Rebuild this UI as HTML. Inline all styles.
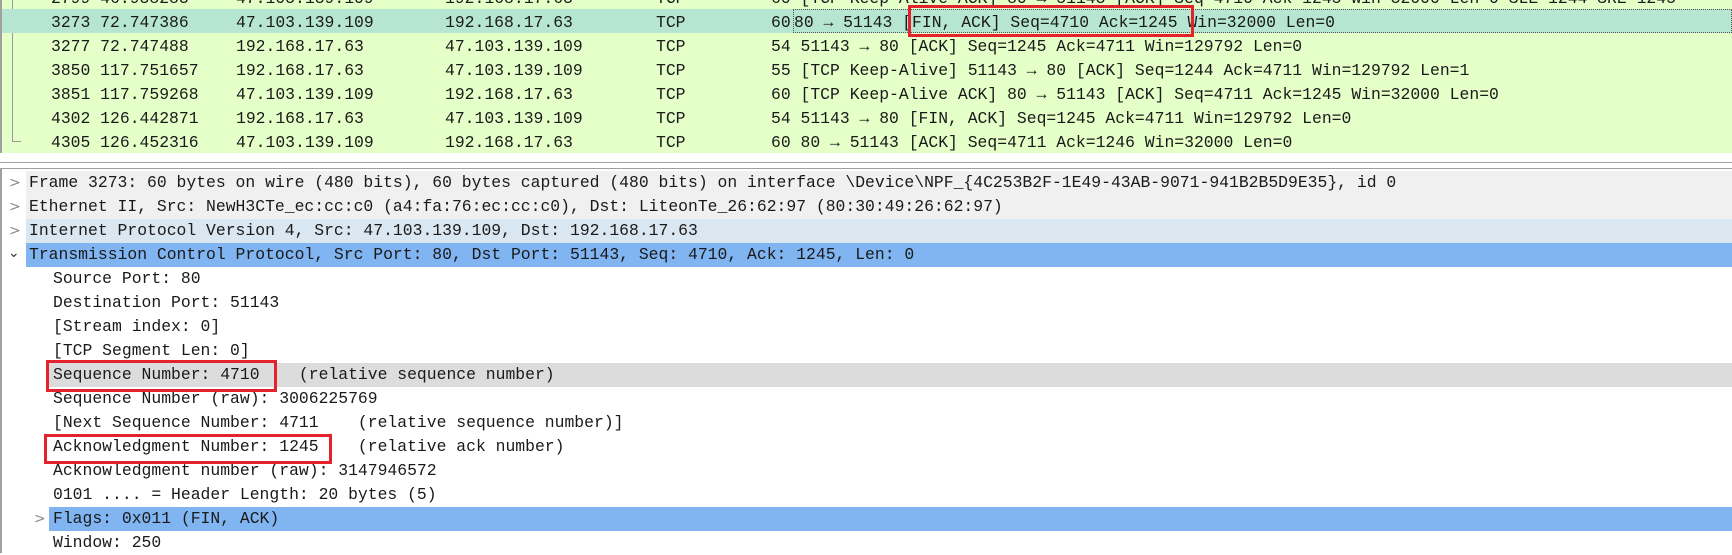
<!DOCTYPE html>
<html><head><style>
*{margin:0;padding:0;box-sizing:border-box}
body{width:1732px;height:553px;overflow:hidden;background:#fff;font-family:"Liberation Mono","DejaVu Sans Mono",monospace;font-size:16.4px;color:#1a1a1a;position:relative}
.r{position:absolute;height:24px;line-height:24px;white-space:pre}
.top{position:absolute;left:0;top:0;width:1732px;height:153px;background:#e4ffc7;border-left:2px solid #a0a0a0}
.sel{background:#b6e6d2}
.c{position:absolute;top:2px;white-space:pre}
.rb{position:absolute;border:3.5px solid #e3222b}
.arrow{position:absolute;color:#888;font-family:"DejaVu Sans",sans-serif;font-size:14px}
</style></head><body>
<div class="top"></div>
<div style="position:absolute;left:12px;top:0;width:1px;height:142px;background:#999"></div>
<div style="position:absolute;left:12px;top:141px;width:9px;height:1px;background:#999"></div>

<div class="r" style="top:-15px;left:0;width:1732px"><span class="c" style="left:51px">2799 46.938283</span><span class="c" style="left:236px">47.103.139.109</span><span class="c" style="left:445px">192.168.17.63</span><span class="c" style="left:656px">TCP</span><span class="c" style="left:771px">60 [TCP Keep-Alive ACK] 80 → 51143 [ACK] Seq=4710 Ack=1245 Win=32000 Len=0 SLE=1244 SRE=1245</span></div>

<div class="r sel" style="top:9px;left:2px;width:1730px"><span class="c" style="left:49px">3273 72.747386</span><span class="c" style="left:234px">47.103.139.109</span><span class="c" style="left:443px">192.168.17.63</span><span class="c" style="left:654px">TCP</span><span class="c" style="left:769px">60</span><span class="c" style="left:791px;top:0;height:24px;width:939px;border:1px dotted #555;line-height:26px">80 → 51143 [FIN, ACK] Seq=4710 Ack=1245 Win=32000 Len=0</span></div>
<div class="r" style="top:33px;left:0"><span class="c" style="left:51px">3277 72.747488</span><span class="c" style="left:236px">192.168.17.63</span><span class="c" style="left:445px">47.103.139.109</span><span class="c" style="left:656px">TCP</span><span class="c" style="left:771px">54 51143 → 80 [ACK] Seq=1245 Ack=4711 Win=129792 Len=0</span></div>
<div class="r" style="top:57px;left:0"><span class="c" style="left:51px">3850 117.751657</span><span class="c" style="left:236px">192.168.17.63</span><span class="c" style="left:445px">47.103.139.109</span><span class="c" style="left:656px">TCP</span><span class="c" style="left:771px">55 [TCP Keep-Alive] 51143 → 80 [ACK] Seq=1244 Ack=4711 Win=129792 Len=1</span></div>
<div class="r" style="top:81px;left:0"><span class="c" style="left:51px">3851 117.759268</span><span class="c" style="left:236px">47.103.139.109</span><span class="c" style="left:445px">192.168.17.63</span><span class="c" style="left:656px">TCP</span><span class="c" style="left:771px">60 [TCP Keep-Alive ACK] 80 → 51143 [ACK] Seq=4711 Ack=1245 Win=32000 Len=0</span></div>
<div class="r" style="top:105px;left:0"><span class="c" style="left:51px">4302 126.442871</span><span class="c" style="left:236px">192.168.17.63</span><span class="c" style="left:445px">47.103.139.109</span><span class="c" style="left:656px">TCP</span><span class="c" style="left:771px">54 51143 → 80 [FIN, ACK] Seq=1245 Ack=4711 Win=129792 Len=0</span></div>
<div class="r" style="top:129px;left:0"><span class="c" style="left:51px">4305 126.452316</span><span class="c" style="left:236px">47.103.139.109</span><span class="c" style="left:445px">192.168.17.63</span><span class="c" style="left:656px">TCP</span><span class="c" style="left:771px">60 80 → 51143 [ACK] Seq=4711 Ack=1246 Win=32000 Len=0</span></div>
<div class="rb" style="left:908px;top:5px;width:286px;height:32px"></div>

<div style="position:absolute;left:0;top:162px;width:1732px;height:1px;background:#a0a0a0"></div>
<div style="position:absolute;left:0;top:168px;width:1732px;height:1px;background:#a0a0a0"></div>
<div style="position:absolute;left:0;top:168px;width:2px;height:385px;background:#a0a0a0"></div>

<div class="r" style="top:171px;left:26px;width:1706px;background:#f0f0f0;padding-left:3px">Frame 3273: 60 bytes on wire (480 bits), 60 bytes captured (480 bits) on interface \Device\NPF_{4C253B2F-1E49-43AB-9071-941B2B5D9E35}, id 0</div>
<div class="r" style="top:195px;left:26px;width:1706px;background:#f0f0f0;padding-left:3px">Ethernet II, Src: NewH3CTe_ec:cc:c0 (a4:fa:76:ec:cc:c0), Dst: LiteonTe_26:62:97 (80:30:49:26:62:97)</div>
<div class="r" style="top:219px;left:26px;width:1706px;background:#dae6f0;padding-left:3px">Internet Protocol Version 4, Src: 47.103.139.109, Dst: 192.168.17.63</div>
<div class="r" style="top:243px;left:26px;width:1706px;background:#80b5f2;padding-left:3px">Transmission Control Protocol, Src Port: 80, Dst Port: 51143, Seq: 4710, Ack: 1245, Len: 0</div>
<div class="arrow" style="left:9px;top:175px">&gt;</div>
<div class="arrow" style="left:9px;top:199px">&gt;</div>
<div class="arrow" style="left:9px;top:223px">&gt;</div>
<div class="arrow" style="left:8px;top:245px;color:#333">⌄</div>

<div class="r" style="top:267px;left:53px">Source Port: 80</div>
<div class="r" style="top:291px;left:53px">Destination Port: 51143</div>
<div class="r" style="top:315px;left:53px">[Stream index: 0]</div>
<div class="r" style="top:339px;left:53px">[TCP Segment Len: 0]</div>
<div class="r" style="top:363px;left:49px;width:1683px;background:#dcdcdc;padding-left:4px">Sequence Number: 4710    (relative sequence number)</div>
<div class="r" style="top:387px;left:53px">Sequence Number (raw): 3006225769</div>
<div class="r" style="top:411px;left:53px">[Next Sequence Number: 4711    (relative sequence number)]</div>
<div class="r" style="top:435px;left:53px">Acknowledgment Number: 1245    (relative ack number)</div>
<div class="r" style="top:459px;left:53px">Acknowledgment number (raw): 3147946572</div>
<div class="r" style="top:483px;left:53px">0101 .... = Header Length: 20 bytes (5)</div>
<div class="r" style="top:507px;left:49px;width:1683px;background:#80b5f2;padding-left:4px">Flags: 0x011 (FIN, ACK)</div>
<div class="arrow" style="left:34px;top:511px">&gt;</div>
<div class="r" style="top:531px;left:53px">Window: 250</div>

<div class="rb" style="left:46px;top:360px;width:231px;height:32px"></div>
<div class="rb" style="left:44px;top:434px;width:288px;height:30px"></div>
</body></html>
